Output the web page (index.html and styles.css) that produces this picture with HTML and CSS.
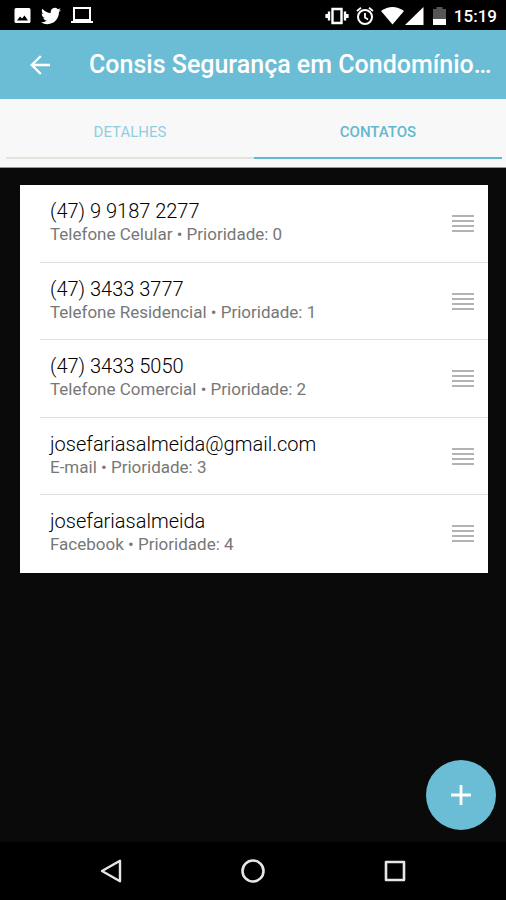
FILE: index.html
```html
<!DOCTYPE html>
<html lang="pt-BR">
<head>
    <meta charset="UTF-8">
    <meta name="viewport" content="width=device-width, initial-scale=1.0">
    <title>Contatos</title>
    <link rel="stylesheet" href="styles.css">
</head>
<body>
    <div class="statusbar">
        <div class="notifications">
            <svg width="17" height="18" viewBox="0 0 17 18"><path fill="#fff" fill-rule="evenodd" d="M2 1h13a1.500 1.500 0 0 1 1.500 1.500v12A1.500 1.500 0 0 1 15 16H2a1.500 1.500 0 0 1-1.500-1.500v-12A1.500 1.500 0 0 1 2 1zM3 13.500h11l-3.500-5-2.500 3-2-2z"/></svg>
            <svg width="20" height="18" viewBox="0 2 24 20"><path fill="#fff" d="M23.950 4.570a10 10 0 0 1-2.820.77 4.960 4.960 0 0 0 2.160-2.720c-.95.550-2 .95-3.130 1.180a4.920 4.920 0 0 0-8.380 4.480C7.690 8.090 4.070 6.130 1.640 3.160a4.820 4.820 0 0 0-.67 2.480c0 1.710.87 3.210 2.190 4.100a4.900 4.900 0 0 1-2.230-.62v.06a4.920 4.920 0 0 0 3.950 4.830 5 5 0 0 1-2.210.08 4.940 4.940 0 0 0 4.600 3.420A9.870 9.870 0 0 1 0 19.540a14 14 0 0 0 7.550 2.210c9.050 0 14-7.500 14-13.980 0-.21 0-.42-.02-.63a9.940 9.940 0 0 0 2.420-2.570z"/></svg>
            <svg width="22" height="18" viewBox="0 0 22 18"><path fill="none" stroke="#fff" stroke-width="2" d="M3 1h16v12H3z"/><path fill="#fff" d="M0 14h22v2H0z"/></svg>
        </div>
        <div class="system">
            <svg class="vibrate" width="24" height="20" viewBox="0 0 24 20"><path fill="none" stroke="#fff" stroke-width="2.400" d="M7.500 3h9v14h-9z"/><path fill="none" stroke="#fff" stroke-width="2.400" d="M4 5.500v9M20 5.500v9M1.600 8v4M22.400 8v4"/></svg>
            <svg class="alarm" width="18" height="20" viewBox="0 0 18 20"><circle cx="9" cy="11" r="7" fill="none" stroke="#fff" stroke-width="2"/><path fill="none" stroke="#fff" stroke-width="1.800" d="M9 7v4.500l3 2M1 5l4-3.200M17 5l-4-3.200"/></svg>
            <svg class="wifi" width="23" height="20" viewBox="0 0 23 20"><path fill="#fff" d="M0 5Q11.500-3 23 5L11.500 18.500z"/></svg>
            <svg class="signal" width="19" height="20" viewBox="0 0 19 20"><path fill="#fff" d="M18.500 1v18H0z"/></svg>
            <svg class="battery" width="13" height="20" viewBox="0 0 13 20"><path fill="#555" d="M3.500 1h6v2H13v10H0V3h3.500z"/><path fill="#fff" d="M0 13h13v6H0z"/></svg>
            <span>15:19</span>
        </div>
    </div>

    <header class="appbar">
        <button class="back" aria-label="Voltar">
            <svg width="20" height="20" viewBox="0 0 20 20"><path fill="none" stroke="#fff" stroke-width="2.400" d="M20 10H2M10.800 1 1.800 10l9 9"/></svg>
        </button>
        <h1>Consis Segurança em Condomínio…</h1>
    </header>

    <nav class="tabs">
        <a href="#detalhes">DETALHES</a>
        <a href="#contatos" class="active">CONTATOS</a>
    </nav>

    <main>
        <ul class="contacts">
            <li>
                <div class="contact">
                    <p class="value">(47) 9 9187 2277</p>
                    <p class="type">Telefone Celular • Prioridade: 0</p>
                </div>
                <button class="handle" aria-label="Reordenar"><i></i><i></i><i></i><i></i></button>
            </li>
            <li>
                <div class="contact">
                    <p class="value">(47) 3433 3777</p>
                    <p class="type">Telefone Residencial • Prioridade: 1</p>
                </div>
                <button class="handle" aria-label="Reordenar"><i></i><i></i><i></i><i></i></button>
            </li>
            <li>
                <div class="contact">
                    <p class="value">(47) 3433 5050</p>
                    <p class="type">Telefone Comercial • Prioridade: 2</p>
                </div>
                <button class="handle" aria-label="Reordenar"><i></i><i></i><i></i><i></i></button>
            </li>
            <li>
                <div class="contact">
                    <p class="value">josefariasalmeida@gmail.com</p>
                    <p class="type">E-mail • Prioridade: 3</p>
                </div>
                <button class="handle" aria-label="Reordenar"><i></i><i></i><i></i><i></i></button>
            </li>
            <li>
                <div class="contact">
                    <p class="value">josefariasalmeida</p>
                    <p class="type">Facebook • Prioridade: 4</p>
                </div>
                <button class="handle" aria-label="Reordenar"><i></i><i></i><i></i><i></i></button>
            </li>
        </ul>
        <button class="add" aria-label="Adicionar contato">
            <svg width="20" height="20" viewBox="0 0 20 20"><path fill="none" stroke="#fff" stroke-width="2.800" d="M10 0v20M0 10h20"/></svg>
        </button>
    </main>

    <div class="navbar">
        <button aria-label="Voltar">
            <svg width="24" height="24" viewBox="0 0 24 24"><path fill="none" stroke="#e6e6e6" stroke-width="2.400" stroke-linejoin="round" d="M21 1.800v20.400L3 12z"/></svg>
        </button>
        <button aria-label="Início">
            <svg width="24" height="24" viewBox="0 0 24 24"><circle cx="12" cy="12" r="10.500" fill="none" stroke="#e6e6e6" stroke-width="2.600"/></svg>
        </button>
        <button aria-label="Recentes">
            <svg width="24" height="24" viewBox="0 0 24 24"><path fill="none" stroke="#e6e6e6" stroke-width="2.600" stroke-linejoin="round" d="M3 3h18v18H3z"/></svg>
        </button>
    </div>
</body>
</html>
```

FILE: styles.css
```css
* {
    box-sizing: border-box;
    margin: 0;
    padding: 0;
}

body {
    display: flex;
    flex-direction: column;
    min-height: 100vh;
    font-family: Roboto, "Liberation Sans", sans-serif;
    background-color: #0a0a0a;
}

button {
    border: none;
    background: none;
}

svg {
    display: block;
}

.statusbar {
    display: flex;
    justify-content: space-between;
    align-items: center;
    height: 30px;
    padding: 1px 9px 0 14px;
    background-color: #000;
    color: #fff;
    font-size: 17px;
    font-weight: 500;
}

.notifications, .system {
    display: flex;
    align-items: center;
}

.notifications {
    gap: 10px;
}

.alarm {
    margin-left: 7px;
}

.wifi {
    margin-left: 7px;
}

.signal {
    margin-left: 1px;
}

.battery {
    margin: 0 8px 0 9px;
}

.appbar {
    display: flex;
    align-items: center;
    height: 69px;
    background-color: #6bbdd6;
    color: #fff;
}

.back {
    padding: 10px 39px 10px 30px;
}

.appbar h1 {
    flex: 1;
    overflow: hidden;
    white-space: nowrap;
    font-size: 25px;
    font-weight: 500;
}

.tabs {
    display: flex;
    height: 69px;
    padding: 0 4px 8px 6px;
    background-color: #f8f8f8;
    border-bottom: 1px solid #999;
}

.tabs a {
    flex: 1;
    display: flex;
    align-items: center;
    justify-content: center;
    padding-top: 8px;
    border-bottom: 2px solid #e3e3dc;
    color: #8fcee0;
    font-size: 15px;
    font-weight: 400;
    text-decoration: none;
}

.tabs a.active {
    border-color: #62b8cf;
    color: #62b8d2;
    font-weight: 500;
}

main {
    position: relative;
    flex: 1;
    padding: 17px 18px 17px 20px;
}

.contacts {
    display: grid;
    grid-auto-rows: 1fr;
    min-height: 388px;
    background-color: #fff;
    list-style: none;
}

.contacts li {
    display: flex;
    justify-content: space-between;
    margin-left: 20px;
    padding: 14px 14px 0 10px;
    border-bottom: 1px solid #e0e0e0;
}

.contacts li:last-child {
    border-bottom: none;
}

.value {
    color: #000;
    font-size: 20px;
    font-weight: 300;
    line-height: 24px;
}

.type {
    color: #777;
    font-size: 17px;
    line-height: 22px;
}

.handle {
    display: flex;
    flex-direction: column;
    align-self: flex-start;
    gap: 3px;
    margin-top: 16px;
}

.handle i {
    width: 22px;
    height: 2px;
    background-color: #b3b3b3;
}

.add {
    position: absolute;
    right: 10px;
    bottom: 12px;
    display: flex;
    align-items: center;
    justify-content: center;
    width: 70px;
    height: 70px;
    border-radius: 50%;
    background-color: #6bbdd6;
}

.navbar {
    display: flex;
    justify-content: center;
    align-items: center;
    gap: 118px;
    height: 58px;
    background-color: #000;
}
```
